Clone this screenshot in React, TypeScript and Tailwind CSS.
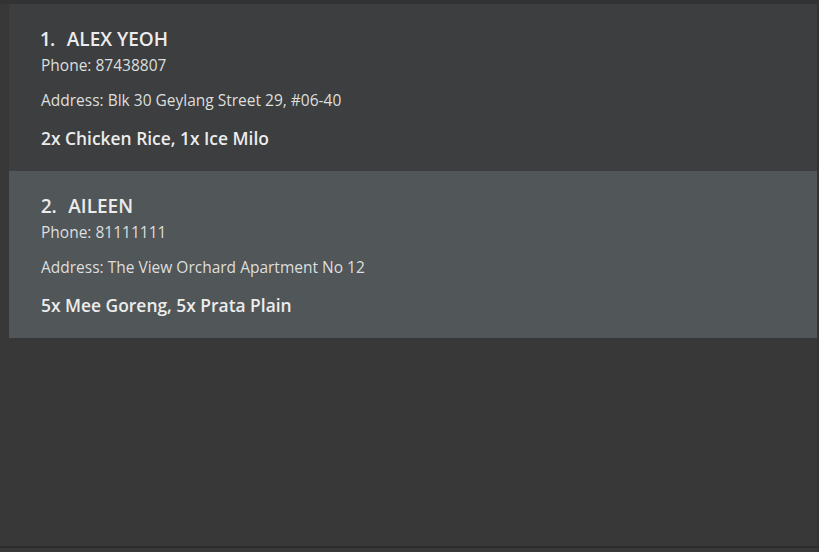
const orders = [
  {
    id: 1,
    name: 'ALEX YEOH',
    phone: '87438807',
    address: 'Blk 30 Geylang Street 29, #06-40',
    items: '2x Chicken Rice, 1x Ice Milo',
  },
  {
    id: 2,
    name: 'AILEEN',
    phone: '81111111',
    address: 'The View Orchard Apartment No 12',
    items: '5x Mee Goreng, 5x Prata Plain',
  },
]

export default function App() {
  return (
    <div className="w-[819px] h-[552px] bg-[#383838] flex flex-col font-['Open_Sans',sans-serif]">
      <div className="h-[4px] bg-[#333333]" />
      <div className="flex-1 flex pl-[9px] pr-[2px]">
        <div className="flex-1 flex flex-col">
          {orders.map((order, index) => (
            <div
              key={order.id}
              className={`h-[167px] pl-[32px] pt-[23px] flex flex-col ${
                index % 2 === 0 ? 'bg-[#3c3e3f]' : 'bg-[#515658]'
              }`}
            >
              <div className="flex items-baseline text-[19px] leading-[24px] font-semibold text-[#ececec]">
                <span className="mr-[11.5px] proportional-nums">{order.id}.</span>
                <span>{order.name}</span>
              </div>
              <p className="mt-[4px] text-[15.5px] leading-[20px] text-[#dedede]">Phone: {order.phone}</p>
              <p className="mt-[15px] text-[15.5px] leading-[20px] text-[#dedede]">Address: {order.address}</p>
              <p className="mt-[16px] text-[17.4px] leading-[24px] font-semibold text-[#ececec]">{order.items}</p>
            </div>
          ))}
        </div>
        <div className="w-[2px] bg-[#333333] -mr-[2px]" />
      </div>
      <div className="h-[2px] bg-[#2b2b2b]" />
      <div className="h-[4px]" />
    </div>
  )
}
